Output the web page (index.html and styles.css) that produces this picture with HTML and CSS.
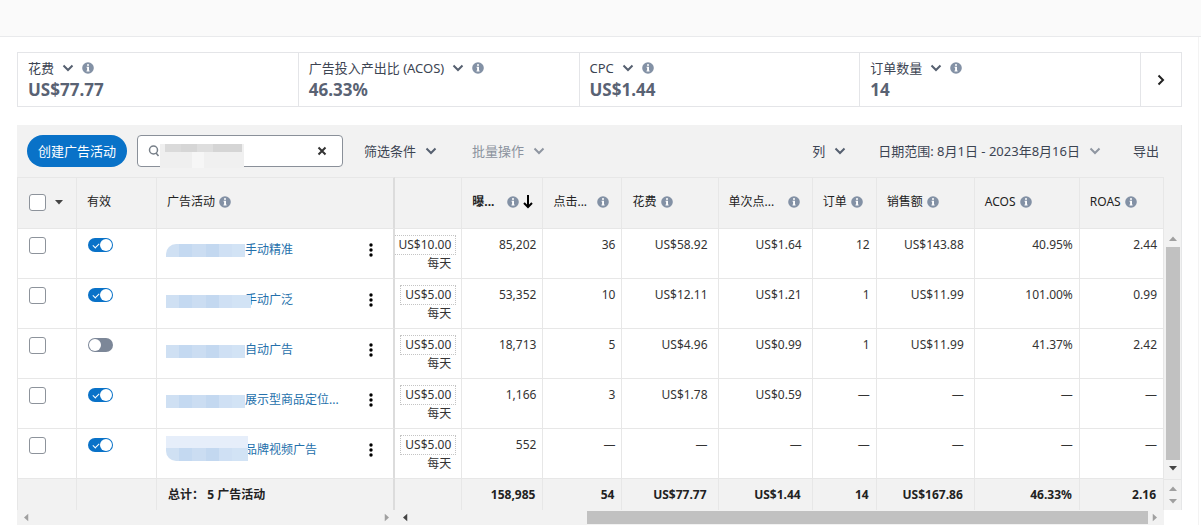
FILE: index.html
```html
<!DOCTYPE html>
<html lang="zh-CN">
<head>
    <meta charset="UTF-8">
    <meta name="viewport" content="width=device-width, initial-scale=1.0">
    <title>广告活动</title>
    <link rel="stylesheet" href="styles.css">
</head>
<body>
    <!-- Shared icons -->
    <svg class="sprite" aria-hidden="true">
        <symbol id="info" viewBox="0 0 12 12">
            <circle cx="6" cy="6" r="5.8" fill="#8391a5"/>
            <path d="M5 2.300h2v1.500H5zM4.600 4.800H7v3.600h.6v1H4.500v-1h.6V5.800h-.5z" fill="#fff"/>
        </symbol>
        <symbol id="chevron" viewBox="0 0 12 8">
            <path d="M1.500 1.500 6 6l4.500-4.500" fill="none" stroke="currentColor" stroke-width="2"/>
        </symbol>
        <symbol id="dots" viewBox="0 0 4 14">
            <circle cx="2" cy="2" r="1.700"/><circle cx="2" cy="7" r="1.700"/><circle cx="2" cy="12" r="1.700"/>
        </symbol>
        <symbol id="tri" viewBox="0 0 8 5">
            <path d="M0 0h8L4 4.500z" fill="currentColor"/>
        </symbol>
    </svg>

    <header class="topbar"></header>

    <main>
        <section class="metrics">
            <div class="metric">
                <button class="metric-name">花费 <svg class="chevron"><use href="#chevron"/></svg> <svg class="info"><use href="#info"/></svg></button>
                <strong>US$77.77</strong>
            </div>
            <div class="metric">
                <button class="metric-name">广告投入产出比 (ACOS) <svg class="chevron"><use href="#chevron"/></svg> <svg class="info"><use href="#info"/></svg></button>
                <strong>46.33%</strong>
            </div>
            <div class="metric">
                <button class="metric-name">CPC <svg class="chevron"><use href="#chevron"/></svg> <svg class="info"><use href="#info"/></svg></button>
                <strong>US$1.44</strong>
            </div>
            <div class="metric">
                <button class="metric-name">订单数量 <svg class="chevron"><use href="#chevron"/></svg> <svg class="info"><use href="#info"/></svg></button>
                <strong>14</strong>
            </div>
            <button class="next" aria-label="更多指标">
                <svg width="8" height="12" viewBox="0 0 8 12"><path d="M1.500 1.500 6 6l-4.500 4.500" fill="none" stroke="currentColor" stroke-width="2"/></svg>
            </button>
        </section>

        <section class="panel">
            <div class="toolbar">
                <button class="create">创建广告活动</button>
                <div class="search">
                    <svg width="12" height="12" viewBox="0 0 12 12"><circle cx="5.500" cy="5" r="4" fill="none" stroke="#777f88" stroke-width="1.500"/><path d="m8 8 2.500 3" stroke="#777f88" stroke-width="1.500"/></svg>
                    <input type="text" aria-label="搜索广告活动">
                    <button class="clear" aria-label="清除"><svg width="10" height="10" viewBox="0 0 10 10"><path d="m1.500 1.500 7 7m0-7-7 7" stroke="currentColor" stroke-width="2"/></svg></button>
                    <span class="search-mask"></span>
                </div>
                <button class="tool">筛选条件 <svg class="chevron"><use href="#chevron"/></svg></button>
                <button class="tool muted">批量操作 <svg class="chevron"><use href="#chevron"/></svg></button>
                <div class="tools-right">
                    <button class="tool">列 <svg class="chevron"><use href="#chevron"/></svg></button>
                    <button class="tool date">日期范围: 8月1日 - 2023年8月16日 <svg class="chevron"><use href="#chevron"/></svg></button>
                    <button class="tool">导出</button>
                </div>
            </div>

            <div class="table-wrap">
                <table>
                    <colgroup>
                        <col class="c-check"><col class="c-active"><col class="c-name"><col class="c-budget">
                        <col class="c-impr"><col class="c-clicks"><col class="c-spend"><col class="c-cpc">
                        <col class="c-orders"><col class="c-sales"><col class="c-acos"><col class="c-roas">
                    </colgroup>
                    <thead>
                        <tr>
                            <th><div class="head"><input type="checkbox" class="check" aria-label="全选"><svg class="caret"><use href="#tri"/></svg></div></th>
                            <th>有效</th>
                            <th class="pinned"><div class="head">广告活动 <svg class="info"><use href="#info"/></svg></div></th>
                            <th></th>
                            <th class="sorted"><div class="head spread">曝... <svg class="info"><use href="#info"/></svg><svg class="sort" viewBox="0 0 10 14"><path d="M5 0v12M1 8l4 4 4-4" fill="none" stroke="#000" stroke-width="2"/></svg></div></th>
                            <th><div class="head spread">点击... <svg class="info"><use href="#info"/></svg></div></th>
                            <th><div class="head">花费 <svg class="info"><use href="#info"/></svg></div></th>
                            <th><div class="head spread">单次点... <svg class="info"><use href="#info"/></svg></div></th>
                            <th><div class="head">订单 <svg class="info"><use href="#info"/></svg></div></th>
                            <th><div class="head">销售额 <svg class="info"><use href="#info"/></svg></div></th>
                            <th><div class="head">ACOS <svg class="info"><use href="#info"/></svg></div></th>
                            <th><div class="head">ROAS <svg class="info"><use href="#info"/></svg></div></th>
                        </tr>
                    </thead>
                    <tbody>
                        <tr>
                            <td class="pick"><input type="checkbox" class="check" aria-label="选择 手动精准"></td>
                            <td class="active"><input type="checkbox" class="switch" aria-label="有效 手动精准" checked></td>
                            <td class="pinned name"><div><a href="#"><span class="mask round"></span>手动精准</a><button class="kebab" aria-label="操作"><svg><use href="#dots"/></svg></button></div></td>
                            <td class="budget"><button>US$10.00</button><span>每天</span></td>
                            <td>85,202</td><td>36</td><td class="money">US$58.92</td><td class="money">US$1.64</td>
                            <td>12</td><td class="money">US$143.88</td><td>40.95%</td><td>2.44</td>
                        </tr>
                        <tr>
                            <td class="pick"><input type="checkbox" class="check" aria-label="选择 手动广泛"></td>
                            <td class="active"><input type="checkbox" class="switch" aria-label="有效 手动广泛" checked></td>
                            <td class="pinned name"><div><a href="#"><span class="mask wide"></span>手动广泛</a><button class="kebab" aria-label="操作"><svg><use href="#dots"/></svg></button></div></td>
                            <td class="budget"><button>US$5.00</button><span>每天</span></td>
                            <td>53,352</td><td>10</td><td class="money">US$12.11</td><td class="money">US$1.21</td>
                            <td>1</td><td class="money">US$11.99</td><td>101.00%</td><td>0.99</td>
                        </tr>
                        <tr>
                            <td class="pick"><input type="checkbox" class="check" aria-label="选择 自动广告"></td>
                            <td class="active"><input type="checkbox" class="switch" aria-label="有效 自动广告"></td>
                            <td class="pinned name"><div><a href="#"><span class="mask"></span>自动广告</a><button class="kebab" aria-label="操作"><svg><use href="#dots"/></svg></button></div></td>
                            <td class="budget"><button>US$5.00</button><span>每天</span></td>
                            <td>18,713</td><td>5</td><td class="money">US$4.96</td><td class="money">US$0.99</td>
                            <td>1</td><td class="money">US$11.99</td><td>41.37%</td><td>2.42</td>
                        </tr>
                        <tr>
                            <td class="pick"><input type="checkbox" class="check" aria-label="选择 展示型商品定位"></td>
                            <td class="active"><input type="checkbox" class="switch" aria-label="有效 展示型商品定位" checked></td>
                            <td class="pinned name"><div><a href="#"><span class="mask"></span>展示型商品定位...</a><button class="kebab" aria-label="操作"><svg><use href="#dots"/></svg></button></div></td>
                            <td class="budget"><button>US$5.00</button><span>每天</span></td>
                            <td>1,166</td><td>3</td><td class="money">US$1.78</td><td class="money">US$0.59</td>
                            <td>—</td><td class="money">—</td><td>—</td><td>—</td>
                        </tr>
                        <tr>
                            <td class="pick"><input type="checkbox" class="check" aria-label="选择 品牌视频广告"></td>
                            <td class="active"><input type="checkbox" class="switch" aria-label="有效 品牌视频广告" checked></td>
                            <td class="pinned name"><div><a href="#"><span class="mask tall"></span>品牌视频广告</a><button class="kebab" aria-label="操作"><svg><use href="#dots"/></svg></button></div></td>
                            <td class="budget"><button>US$5.00</button><span>每天</span></td>
                            <td>552</td><td>—</td><td class="money">—</td><td class="money">—</td>
                            <td>—</td><td class="money">—</td><td>—</td><td>—</td>
                        </tr>
                    </tbody>
                    <tfoot>
                        <tr>
                            <td></td>
                            <td></td>
                            <td class="pinned total">总计： 5 广告活动</td>
                            <td></td>
                            <td>158,985</td><td>54</td><td class="money">US$77.77</td><td class="money">US$1.44</td>
                            <td>14</td><td class="money">US$167.86</td><td>46.33%</td><td>2.16</td>
                        </tr>
                    </tfoot>
                </table>

                <div class="vscroll">
                    <div class="vtrack">
                        <svg class="caret up light"><use href="#tri"/></svg>
                        <div class="thumb"></div>
                        <svg class="caret"><use href="#tri"/></svg>
                    </div>
                    <div class="vfoot">
                        <svg class="caret up light"><use href="#tri"/></svg>
                        <svg class="caret light"><use href="#tri"/></svg>
                    </div>
                </div>

                <div class="hscroll">
                    <div class="hleft">
                        <svg class="caret left light"><use href="#tri"/></svg>
                        <svg class="caret right light"><use href="#tri"/></svg>
                    </div>
                    <div class="hright">
                        <svg class="caret left"><use href="#tri"/></svg>
                        <div class="thumb"></div>
                        <svg class="caret right light"><use href="#tri"/></svg>
                    </div>
                </div>
            </div>
        </section>
    </main>
</body>
</html>
```
FILE: styles.css
```css
* {
    box-sizing: border-box;
}

body {
    margin: 0;
    font-family: "Noto Sans", "Noto Sans CJK SC", sans-serif;
    font-size: 12px;
    line-height: 20px;
    color: #333;
    background-color: #fff;
}

button {
    margin: 0;
    padding: 0;
    border: none;
    background: none;
    font: inherit;
    color: inherit;
    cursor: pointer;
}

svg {
    display: block;
    flex: none;
}

.sprite {
    position: absolute;
    width: 0;
    height: 0;
}

.info {
    width: 12px;
    height: 12px;
}

.chevron {
    width: 12px;
    height: 8px;
    color: #566070;
}

.caret {
    width: 8px;
    height: 5px;
    color: #444;
}

.caret.light {
    color: #a0a0a0;
}

.up {
    transform: rotate(180deg);
}

.left {
    transform: rotate(90deg);
}

.right {
    transform: rotate(-90deg);
}

.topbar {
    height: 37px;
    background-color: #fafafa;
    border-bottom: 1px solid #e9eaec;
}

main {
    margin-right: 2px;
    padding: 15px 16px 0 17px;
    border-right: 1px solid #f3f3f3;
}

/* Metric cards */
.metrics {
    display: flex;
    height: 55px;
    border: 1px solid #e4e5e8;
}

.metric {
    flex: 1;
    padding: 5px 10px;
    border-right: 1px solid #e4e5e8;
}

.metric-name {
    display: flex;
    align-items: center;
    gap: 8px;
    font-size: 13px;
    color: #3c4452;
}

.metric strong {
    display: block;
    font-size: 17px;
    line-height: 24px;
    color: #596273;
}

.next {
    display: flex;
    align-items: center;
    justify-content: center;
    width: 40px;
    color: #222;
}

/* Toolbar */
.panel {
    margin-top: 18px;
}

.toolbar {
    display: flex;
    align-items: center;
    height: 52px;
    padding: 0 22px 0 10px;
    border-right: 1px solid #e6e7e8;
    background-color: #f2f2f2;
    font-size: 13px;
}

.create {
    height: 32px;
    padding: 0 11px;
    border-radius: 16px;
    background-color: #0972c8;
    color: #fff;
}

.search {
    position: relative;
    display: flex;
    align-items: center;
    width: 206px;
    height: 32px;
    margin: 0 21px 0 10px;
    padding: 0 15px 0 10px;
    border: 1px solid #8a9099;
    border-radius: 4px;
    background-color: #fff;
}

.search input {
    flex: 1;
    min-width: 0;
    border: none;
    outline: none;
    background: none;
    font: inherit;
}

.search-mask {
    position: absolute;
    left: 22px;
    top: 8px;
    width: 84px;
    height: 24px;
    background: linear-gradient(90deg, #efefef 32px, #f6f6f6 32px, #f6f6f6 44px, #f0f0f0 44px);
}

.search-mask::before {
    content: "";
    display: block;
    height: 8px;
    margin: 0 2px 0 5px;
    background: linear-gradient(90deg, #dadada 16px, #d6d6d6 16px, #d6d6d6 32px, #dedede 32px, #dedede 48px, #d5d5d5 48px);
}

.tool {
    display: flex;
    align-items: center;
    gap: 9px;
    color: #3c4452;
}

.tool.muted {
    margin-left: 35px;
    color: #8b929e;
}

.muted .chevron,
.date .chevron {
    color: #8f96a1;
}

.tools-right {
    display: flex;
    gap: 32px;
    margin-left: auto;
}

/* Campaign table */
.table-wrap {
    display: grid;
    grid-template-columns: 1fr 18px;
}

table {
    width: 100%;
    table-layout: fixed;
    border-collapse: separate;
    border-spacing: 0;
}

.c-check { width: 60px; }
.c-active { width: 80px; }
.c-name { width: 238px; }
.c-budget { width: 67px; }
.c-impr { width: 81px; }
.c-clicks { width: 79px; }
.c-spend { width: 96px; }
.c-cpc { width: 94px; }
.c-orders { width: 64px; }
.c-sales { width: 98px; }
.c-acos { width: 105px; }
.c-roas { width: 84px; }

th,
td {
    height: 50px;
    padding: 6px 6px 0 0;
    border-right: 1px solid #e7e7e7;
    border-bottom: 1px solid #e7e7e7;
    text-align: right;
    vertical-align: top;
    overflow: hidden;
    white-space: nowrap;
}

th {
    height: 52px;
    padding: 0 0 2px 10px;
    border-top: 1px solid #e7e7e7;
    background-color: #f2f2f2;
    font-weight: normal;
    text-align: left;
    vertical-align: middle;
    color: #222;
}

th:first-child,
td:first-child {
    border-left: 1px solid #e7e7e7;
}

.head {
    display: flex;
    align-items: center;
    gap: 4px;
}

.spread {
    margin-right: 12px;
}

.spread .info {
    margin-left: auto;
}

.sorted {
    font-weight: bold;
}

.sorted .spread {
    margin-right: 9px;
}

.sort {
    width: 10px;
    height: 14px;
}

.pinned {
    border-right: 2px solid #dcdcdc;
}

td.money {
    padding-right: 10px;
}

.check {
    appearance: none;
    display: block;
    width: 17px;
    height: 17px;
    margin: 0;
    border: 1px solid #8d939b;
    border-radius: 3px;
    background-color: #fff;
}

.head .check {
    margin-right: 5px;
}

th:first-child {
    padding-left: 11px;
}

td.pick {
    padding: 8px 0 0 11px;
}

td.active {
    padding: 9px 0 0 11px;
}

.switch {
    appearance: none;
    position: relative;
    display: block;
    width: 25px;
    height: 14px;
    margin: 0;
    border-radius: 7px;
    background-color: #7c8798;
}

.switch::before {
    content: "";
    position: absolute;
    top: 1px;
    left: 1px;
    width: 12px;
    height: 12px;
    border-radius: 50%;
    background-color: #fff;
}

.switch:checked {
    background-color: #0972c8;
}

.switch:checked::before {
    left: 12px;
}

.switch:checked::after {
    content: "";
    position: absolute;
    top: 5px;
    left: 5px;
    width: 5px;
    height: 3px;
    border-left: 1px solid #fff;
    border-bottom: 1px solid #fff;
    transform: rotate(-45deg);
}

td.name {
    padding: 11px 20px 0 9px;
}

.name div {
    display: flex;
    align-items: center;
    justify-content: space-between;
}

.name a {
    position: relative;
    padding-left: 79px;
    color: #2470ab;
    text-decoration: none;
}

.mask {
    position: absolute;
    left: 0;
    top: 5px;
    width: 79px;
    height: 13px;
    background: linear-gradient(90deg, #cfe0f3 13px, #c4d9f1 13px, #c4d9f1 26px, #cbddf2 26px, #cbddf2 40px, #c3d8f0 40px, #c3d8f0 53px, #cfe0f4 53px, #cfe0f4 66px, #d2e3f5 66px);
}

.mask.round {
    top: 4px;
    border-radius: 10px 0 0 0;
}

.mask.wide {
    width: 85px;
}

.mask.tall {
    top: -4px;
    width: 82px;
    height: 25px;
    border-top: 12px solid #e6eefa;
    border-radius: 0 0 0 10px;
}

.kebab svg {
    width: 4px;
    height: 14px;
}

td.budget {
    padding: 6px 5px 0 0;
}

.budget button {
    float: right;
    height: 20px;
    padding: 0 4px;
    border: 1px dotted #c4c4c4;
    line-height: 18px;
}

.budget span {
    display: block;
    clear: both;
    padding-right: 5px;
    line-height: 18px;
}

tfoot td {
    height: 31px;
    padding-right: 7px;
    border-bottom: none;
    background-color: #f2f2f2;
    font-weight: bold;
    color: #222;
}

tfoot td.money {
    padding-right: 11px;
}

tfoot td.total {
    padding-left: 11px;
    text-align: left;
}

/* Scrollbars */
.vscroll {
    display: flex;
    flex-direction: column;
    padding-top: 52px;
    border-right: 1px solid #e6e7e8;
    background-color: #f2f2f2;
}

.vtrack {
    flex: 1;
    display: flex;
    flex-direction: column;
    align-items: center;
    gap: 6px;
    padding: 7px 0 8px;
}

.vtrack .thumb {
    flex: 1;
    width: 14px;
}

.thumb {
    background-color: #c1c1c1;
}

.vfoot {
    display: flex;
    flex-direction: column;
    align-items: center;
    justify-content: space-between;
    height: 31px;
    padding: 6px 0;
    border-top: 1px solid #e7e7e7;
}

.hscroll {
    display: flex;
    height: 15px;
    background-color: #f2f2f2;
}

.hleft,
.hright {
    display: flex;
    align-items: center;
    justify-content: space-between;
    padding: 0 5px;
}

.hleft {
    width: 33%;
}

.hright {
    flex: 1;
}

.hright .thumb {
    width: 74%;
    height: 13px;
    margin: 0 3px 0 auto;
}
```
